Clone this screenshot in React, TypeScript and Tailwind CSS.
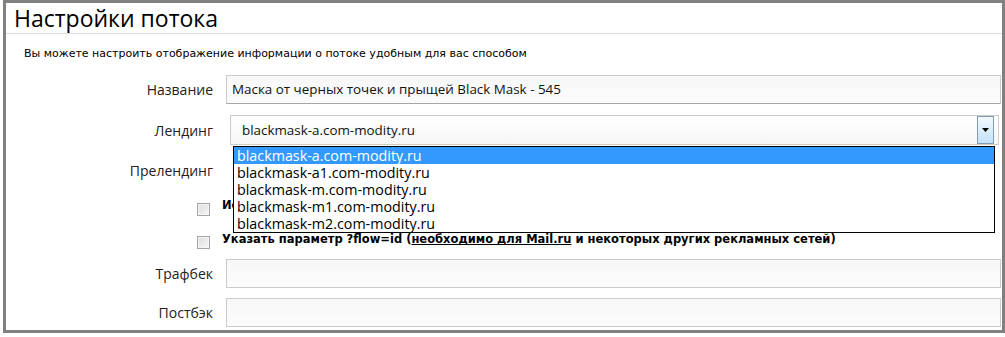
import React from "react";

const seg = { fontFamily: '"Open Sans", "Noto Sans", sans-serif' };
const ver = { fontFamily: '"DejaVu Sans", Verdana, sans-serif' };

function Checkbox() {
  return (
    <div className="w-[13px] h-[13px] border border-[#a5a5a5] bg-gradient-to-br from-[#dcdcdc] to-[#f8f8f8] shadow-[inset_0_0_0_1px_#f4f4f4]" />
  );
}

function Label({ children }: { children: React.ReactNode }) {
  return (
    <div className="w-[207px] shrink-0 text-right text-[14px] text-[#222]" style={seg}>
      {children}
    </div>
  );
}

export default function App() {
  const items = [
    "blackmask-a.com-modity.ru",
    "blackmask-a1.com-modity.ru",
    "blackmask-m.com-modity.ru",
    "blackmask-m1.com-modity.ru",
    "blackmask-m2.com-modity.ru",
  ];
  return (
    <div className="w-[1005px] h-[337px] bg-white overflow-hidden">
      <div className="ml-[3px] w-[1002px] h-[333px] border-[3px] border-[#808080] relative">
        <div className="h-[30px] pl-[8px] flex items-end">
          <div className="text-[23px] leading-[30px] text-black" style={seg}>
            Настройки потока
          </div>
        </div>
        <div className="h-px bg-[#dcdcdc]" />
        <div className="h-[41px] flex items-center pl-[18px] text-[11px] text-black" style={ver}>
          Вы можете настроить отображение информации о потоке удобным для вас способом
        </div>
        {/* Название */}
        <div className="flex items-center h-[29px]">
          <Label>Название</Label>
          <div className="ml-[13px] flex-1 mr-px h-[29px] border border-[#cccccc] border-b-[#a8a8a8] bg-gradient-to-b from-[#f7f7f7] to-[#fcfcfc] flex items-center pl-[5px] text-[13.4px] text-[#111]" style={seg}>
            Маска от черных точек и прыщей Black Mask - 545
          </div>
        </div>
        {/* Лендинг */}
        <div className="flex items-center h-[30px] mt-[11px]">
          <Label>Лендинг</Label>
          <div className="ml-[17px] flex-1 mr-[3px] h-[30px] border border-[#cccccc] bg-gradient-to-b from-white to-[#f6f6f6] flex items-center pl-[11px] pr-[4px] text-[13.4px] text-[#111] relative" style={seg}>
            <span className="flex-1">blackmask-a.com-modity.ru</span>
            <div className="w-[17px] h-[28px] border border-[#7f9db9] bg-gradient-to-b from-[#f2f9ff] to-[#c4e2f6] flex items-center justify-center">
              <svg width="7" height="4" viewBox="0 0 7 4">
                <path d="M0 0h7L3.5 4z" fill="#000" />
              </svg>
            </div>
          </div>
        </div>
        {/* Прелендинг */}
        <div className="flex items-center h-[28px] mt-[11px]">
          <Label>Прелендинг</Label>
        </div>
        {/* checkbox 1 */}
        <div className="flex items-center h-[13px] mt-[19px]">
          <div className="w-[204px] shrink-0 flex justify-end">
            <Checkbox />
          </div>
          <div className="ml-[12px] text-[11.5px] font-bold text-black leading-none -mt-[7px]" style={ver}>
            Использовать прелендинг
          </div>
        </div>
        {/* checkbox 2 */}
        <div className="flex items-center h-[13px] mt-[20px]">
          <div className="w-[204px] shrink-0 flex justify-end">
            <Checkbox />
          </div>
          <div className="ml-[12px] text-[11.5px] font-bold text-black leading-none -mt-[5px] whitespace-nowrap" style={ver}>
            Указать параметр ?flow=id (<span className="underline">необходимо для Mail.ru</span> и некоторых других рекламных сетей)
          </div>
        </div>
        {/* Трафбек */}
        <div className="flex items-center h-[29px] mt-[10px]">
          <Label>Трафбек</Label>
          <div className="ml-[13px] flex-1 mr-px h-[29px] border border-[#cccccc] bg-gradient-to-b from-[#f7f7f7] to-[#fcfcfc]" />
        </div>
        {/* Постбэк */}
        <div className="flex items-center h-[29px] mt-[10px]">
          <Label>Постбэк</Label>
          <div className="ml-[13px] flex-1 mr-px h-[29px] border border-[#cccccc] bg-gradient-to-b from-[#f7f7f7] to-[#fcfcfc]" />
        </div>

        {/* dropdown list */}
        <div className="absolute left-[227px] top-[143px] w-[762px] border border-black bg-white text-[14.3px] text-black" style={seg}>
          {items.map((it, i) => (
            <div
              key={it}
              className={
                "h-[17px] leading-[17px] pl-[3px] " + (i === 0 ? "bg-[#3399ff] text-white" : "")
              }
            >
              {it}
            </div>
          ))}
        </div>
      </div>
    </div>
  );
}
